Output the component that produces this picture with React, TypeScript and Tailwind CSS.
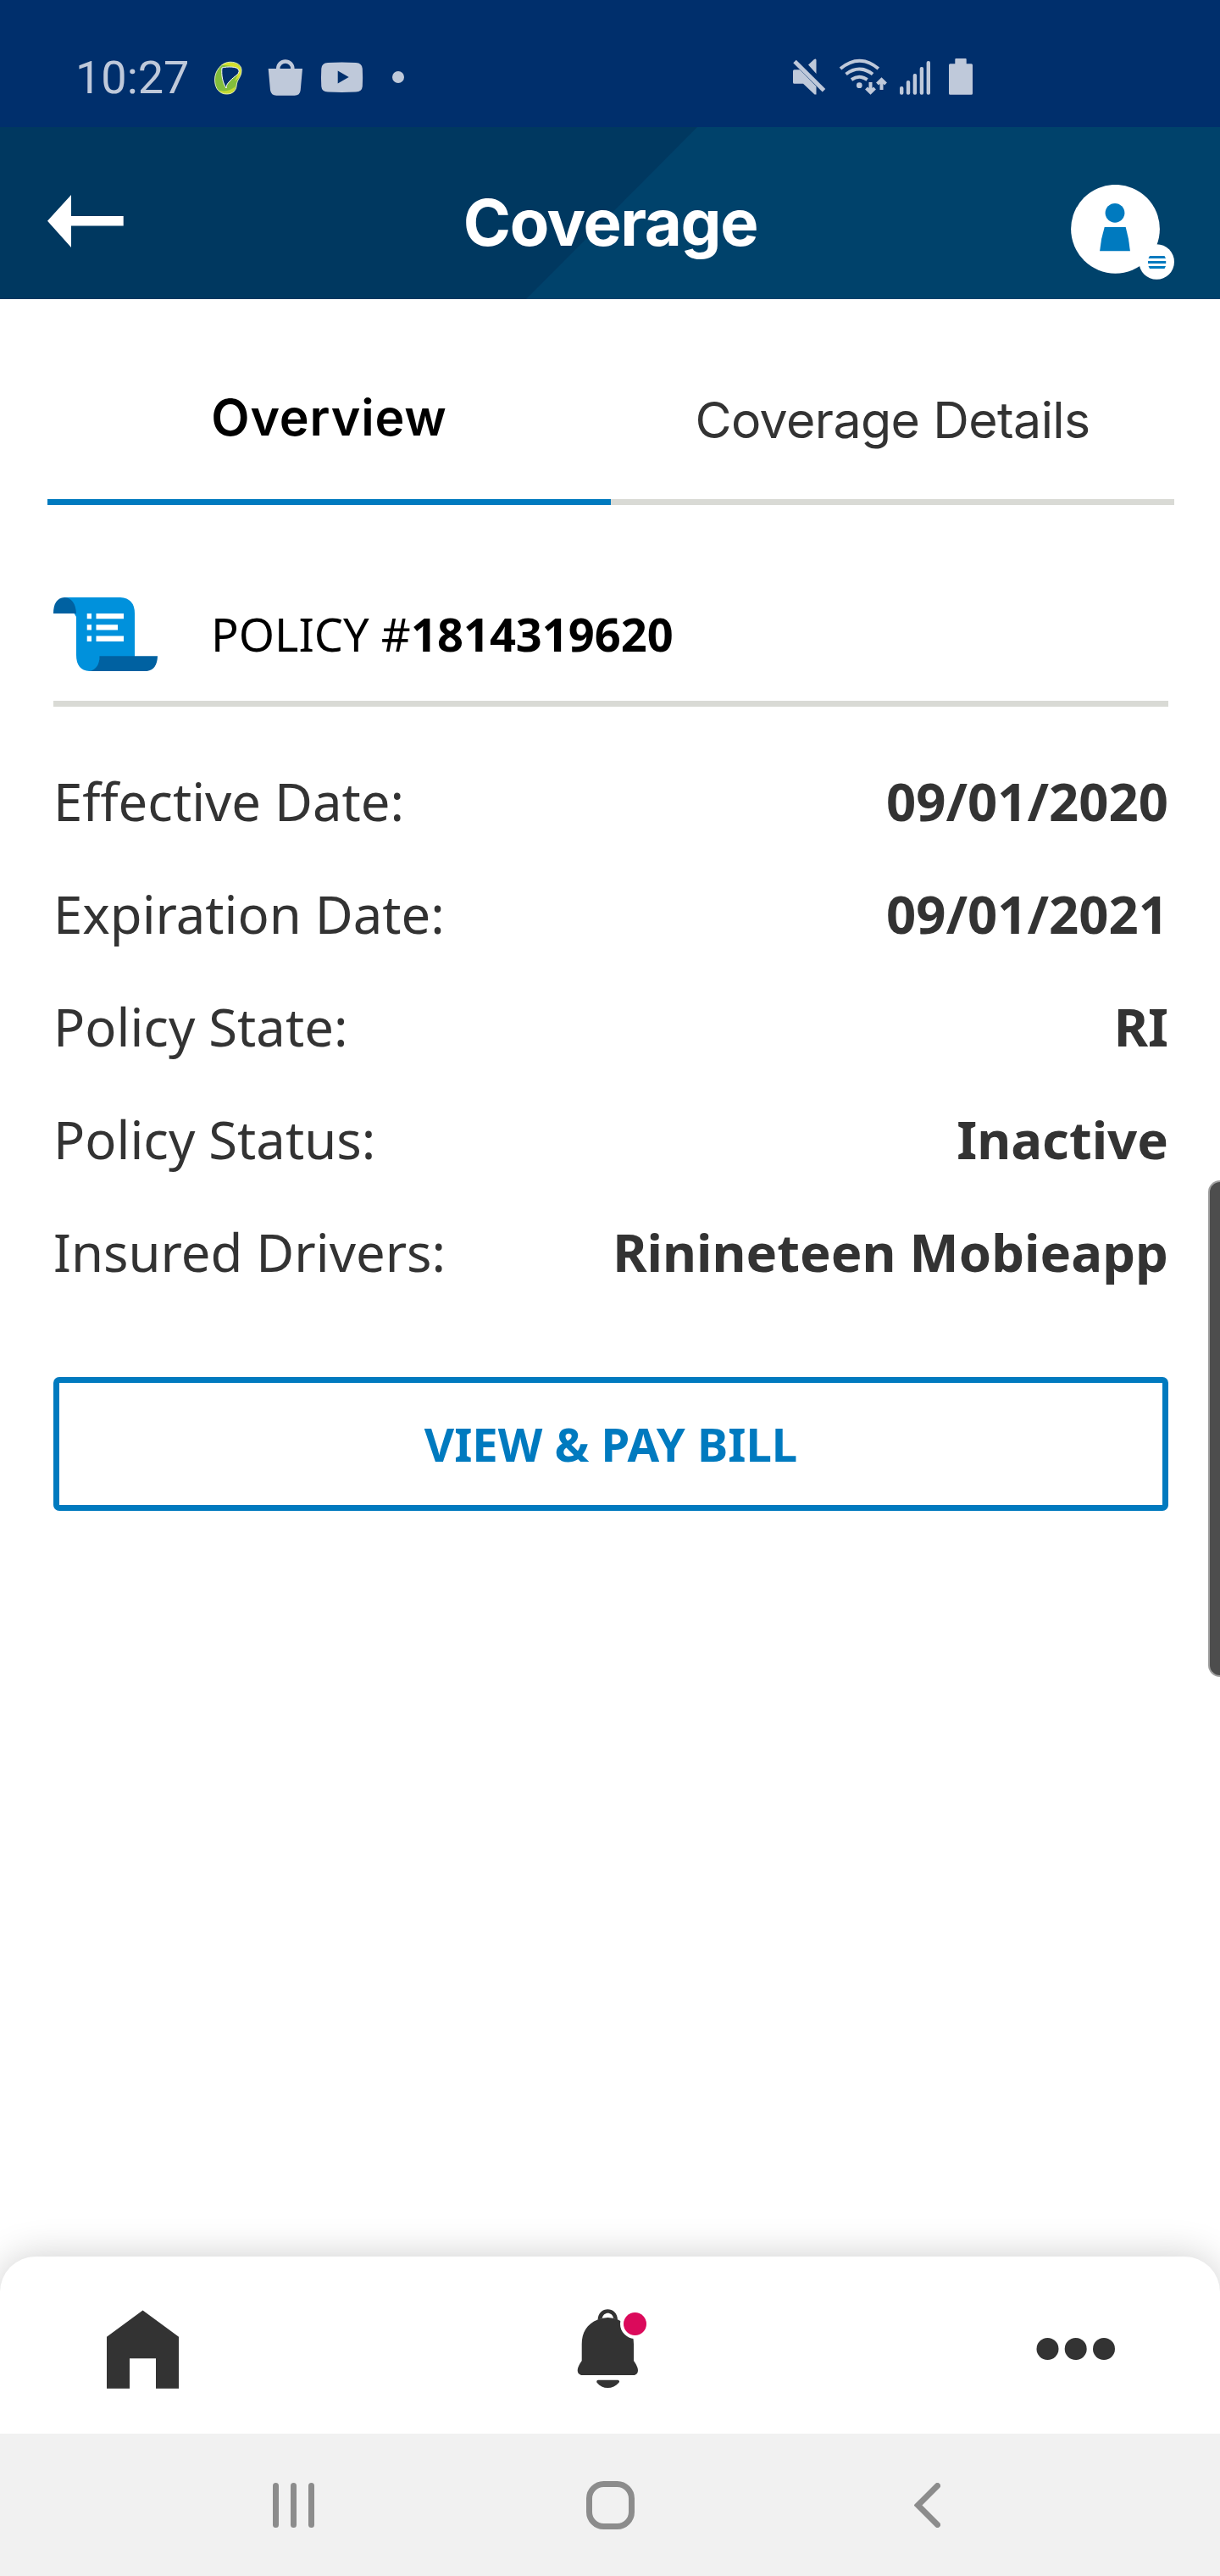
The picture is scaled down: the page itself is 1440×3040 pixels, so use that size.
const rows: [string, string][] = [
  ["Effective Date:", "09/01/2020"],
  ["Expiration Date:", "09/01/2021"],
  ["Policy State:", "RI"],
  ["Policy Status:", "Inactive"],
  ["Insured Drivers:", "Rinineteen Mobieapp"],
];

function StatusBar() {
  return (
    <div className="flex h-[150px] shrink-0 items-center bg-[#002f6c] pt-8 pl-[89px] text-[#bfc9da]">
      <span className="w-[164px] pt-0.5 font-['Roboto'] text-[54px] leading-[62px] whitespace-nowrap">10:27</span>
      <svg className="h-[50px] w-[230px] shrink-0" viewBox="253 66 230 50" fill="currentColor">
        <path
          d="M272 73.200C262 73 253.500 83 253.500 94c0 11 6 17 14 17 8 0 11-5 11.500-9 .500-9 6-10 6-19 0-6-5-9.600-13-9.800Z"
          fill="#82bd3c"
        />
        <path d="M261 77c7-6 23-4 24 6 0 6-4 10-8 13 2-5 5-9 4-13-3-5-12-6-20-6Z" fill="#d5e02e" />
        <path d="M262 80c6-1.500 19-2 20 3 1 5-6 7-10 12-3 3-5 5-5 9-4-6-6-15-5-24Z" fill="#002f6c" stroke="#fff" strokeWidth="1" />
        <path d="M258 106c6 3 14 1 20-4-1 6-4 9-10 9-4 0-8-2-10-5Z" fill="#c5da34" />
        <path
          d="M272 73.200C262 73 253.500 83 253.500 94c0 11 6 17 14 17 8 0 11-5 11.500-9 .500-9 6-10 6-19 0-6-5-9.600-13-9.800Z"
          fill="none"
          stroke="#eef5c8"
          strokeWidth=".9"
        />
        <path d="M316.700 81h9.300a10.800 10.800 0 0 1 21.600 0h9.400l-2.300 25.500q-.700 6.200-7 6.200h-21.500q-6 0-7.200-6.200ZM330.500 81h12.600a6.300 6.300 0 0 0-12.600 0Z" fillRule="evenodd" />
        <path d="M387 74q16.500-.8 33 0 7.300.4 7.800 7 .6 10.500 0 21-.5 6-7.800 6.500-16.500.8-33 0-7.300-.5-7.700-6.500-.6-10.500 0-21 .4-6.600 7.700-7Zm11.700 9.500v15l13-7.500Z" fillRule="evenodd" />
        <circle cx="470" cy="91" r="7" />
      </svg>
      <svg className="ml-[452px] h-[50px] w-[216px] shrink-0" viewBox="935 66 216 50" fill="currentColor">
        <path d="M937.500 82.300H944l19.500 19.700v9.500h-2L948 98.700h-10.500q-1.500 0-1.500-1.500V83.800q0-1.500 1.500-1.500ZM954 76.500l7-6.500q2.500-1.500 2.500 1v16Z" />
        <path d="m938 72.500 34.500 34.300" stroke="currentColor" strokeWidth="5" />
        <g fill="none" stroke="currentColor" strokeWidth="4">
          <path d="M992 81q22.400-18.500 44.800 0" />
          <path d="M998.500 87.500q15.800-12 31.600 0" />
          <path d="M1005 94q9.300-6.500 18.600 0" />
          <path d="M1027.500 97v11M1022.500 104l5 5 5-5M1040.500 106V95M1035.500 99l5-5 5 5" />
        </g>
        <circle cx="1014.300" cy="100.700" r="3.400" />
        <rect x="1062" y="102" width="4.400" height="9.700" rx="2" />
        <rect x="1069.800" y="95" width="4.400" height="16.700" rx="2" />
        <rect x="1077.700" y="87" width="4.400" height="24.700" rx="2" />
        <rect x="1085.700" y="79" width="4.400" height="32.700" rx="2" />
        <rect x="1093.600" y="72" width="4.400" height="39.700" rx="2" />
        <path d="M1128.300 69h11.400q1 0 1 1v5.300h5.800q1.500 0 1.500 1.500v33.400q0 1.500-1.500 1.500h-25q-1.500 0-1.500-1.500V76.800q0-1.500 1.500-1.500h5.800V70q0-1 1-1Z" />
      </svg>
    </div>
  );
}

function Header() {
  return (
    <header className="relative flex h-[203px] shrink-0 items-center justify-between bg-[#00426b] pr-[53px] pl-14">
      <svg className="absolute inset-0 h-full w-full" viewBox="0 0 1440 203">
        <path d="M0 0h823L621 203H0Z" fill="#003860" />
      </svg>
      <svg className="relative mt-[18px] h-[62px] w-[90px]" viewBox="56 230 90 62" fill="#fff">
        <path d="M84 230v25h61.700v11.500H84V292l-28-31.300Z" />
      </svg>
      <h1 className="relative mb-[-20px] ml-[31px] font-['Inter'] text-[76px] leading-[90px] font-bold tracking-[-0.018em] whitespace-nowrap text-white">
        Coverage
      </h1>
      <svg className="relative mt-[45px] h-[112px] w-[123px]" viewBox="1264 218 123 112">
        <circle cx="1316.500" cy="270.300" r="52.400" fill="#fff" />
        <circle cx="1316" cy="251.300" r="11.400" fill="#007abf" />
        <path d="M1303.700 268h25q3.800 13 5.200 28.200h-35.800q1.400-15 5.600-28.200Z" fill="#007abf" />
        <circle cx="1365.200" cy="309" r="20.800" fill="#fff" />
        <path d="M1357 302h17.500l1.500 3h-20.500ZM1355 308h21.200v3H1355ZM1355.500 314H1376l-1.500 3H1357Z" fill="#007abf" />
      </svg>
    </header>
  );
}

function PolicyIcon() {
  return (
    <svg className="h-[87px] w-[123px] shrink-0" viewBox="63 705 123 87">
      <path d="M76 705h66q17 1 17 19v51l-41 1q0 16-12.500 16-15.500-1-15.500-19v-45Z" fill="#0091dc" />
      <path d="M63 724q0-18 13-19 13 1 14 19ZM117.500 774.300H186q-.500 16-12.500 17.700h-68q12-2.500 12-17.700Z" fill="#0061a1" />
      <path d="M102.700 724h5.300v6.300h-5.300ZM113.500 724H146v6.300h-32.500ZM102.700 737.200h5.300v6.300h-5.300ZM113.500 737.200H139v6.300h-25.500ZM102.700 750.600h5.300v6.300h-5.300ZM113.500 750.600H146v6.300h-32.500Z" fill="#fff" />
    </svg>
  );
}

function BottomNav() {
  return (
    <nav className="flex h-[209px] shrink-0 items-center justify-between rounded-t-[42px] bg-white pr-[123px] pl-[126px] shadow-[0_0_46px_rgba(0,0,0,0.2)]">
      <svg className="mt-[9px] h-[93px] w-[85px]" viewBox="126 2725 85 93" fill="#333">
        <path d="m168.500 2725.500 42.500 31.300v61h-27v-35.500h-31v35.500h-27v-61Z" />
      </svg>
      <svg className="mt-[9px] ml-[10px] h-[94px] w-[82px]" viewBox="681 2725 82 94" fill="#333">
        <path d="M705.600 2738c0-17 23.400-17 23.400 0l-4.800-2c-1.500-8.500-12-8.500-13.500 0Z" />
        <path d="M705.500 2737.500q12-5 24 0c13 6 18.500 15 18.500 29v19.500q5 7 5 11.500 0 4-4 5.500h-63q-4.300-1.500-4.300-5.500 0-4.500 5-11.500v-19.500c0-14 6-24 18.800-29ZM706 2808.700h23.500q2.500 1 1 3c-7 8.500-19.500 8.500-26 0q-1-2.500 1.500-3Z" />
        <circle cx="749.500" cy="2742.500" r="17.500" fill="#fff" />
        <circle cx="749.500" cy="2742.500" r="13.500" fill="#db0a5b" />
      </svg>
      <svg className="mt-2 h-[26px] w-[94px]" viewBox="1223 2759 94 26" fill="#333">
        <circle cx="1236.500" cy="2772" r="13" />
        <circle cx="1269.700" cy="2772" r="13" />
        <circle cx="1303" cy="2772" r="13" />
      </svg>
    </nav>
  );
}

function SystemNav() {
  return (
    <div className="flex h-[168px] shrink-0 items-center justify-between bg-[#f1f1f1] px-[322px]">
      <svg className="h-[53px] w-[49px]" viewBox="0 0 49 53" fill="#8c8c8c">
        <rect x="0" width="7" height="53" rx="3.500" />
        <rect x="21" width="7" height="53" rx="3.500" />
        <rect x="42" width="7" height="53" rx="3.500" />
      </svg>
      <svg className="mr-[9px] h-[57px] w-[57px]" viewBox="0 0 57 57" fill="none">
        <rect x="3.500" y="3.500" width="50" height="50" rx="17" stroke="#8c8c8c" strokeWidth="7" />
      </svg>
      <svg className="mr-[8px] h-[53px] w-[31px]" viewBox="0 0 31 53" fill="none">
        <path d="M27.500 3.500 4.500 26.500l23 23" stroke="#8c8c8c" strokeWidth="7" strokeLinecap="round" />
      </svg>
    </div>
  );
}

export default function App() {
  return (
    <div className="relative flex h-[3040px] w-[1440px] flex-col overflow-hidden bg-white font-['Noto_Sans',sans-serif] text-[#333]">
      <StatusBar />
      <Header />
      <div className="mr-[54px] ml-14 flex h-[243px] shrink-0 font-['Inter'] text-[59px] leading-[72px] whitespace-nowrap">
        <div className="flex flex-1 justify-center border-b-[7px] border-[#007abf] pt-[104px] font-semibold tracking-[0.014em] text-black">
          Overview
        </div>
        <div className="flex flex-1 justify-center border-b-[7px] border-[#d9dad5] pt-[107px] tracking-[-0.01em]">
          Coverage Details
        </div>
      </div>
      <main className="flex flex-1 flex-col pt-[109px] pr-[61px] pl-[63px]">
        <div className="flex h-[129px] shrink-0 items-start border-b-[7px] border-[#d9dad5] text-black">
          <PolicyIcon />
          <p className="mt-px ml-[63px] text-[54.2px] leading-[85px] whitespace-nowrap">
            POLICY #<b>1814319620</b>
          </p>
        </div>
        <dl className="mt-[45px] text-[61.6px] leading-[133px] whitespace-nowrap">
          {rows.map(([label, value]) => (
            <div key={label} className="flex justify-between">
              <dt>{label}</dt>
              <dd className="font-bold">{value}</dd>
            </div>
          ))}
        </dl>
        <button className="mt-[81px] flex h-[158px] shrink-0 items-center justify-center rounded-[7px] border-[7px] border-[#007abf] pt-0.5 text-[54.4px] font-bold text-[#007abf]">
          VIEW &amp; PAY BILL
        </button>
      </main>
      <BottomNav />
      <SystemNav />
      <div className="absolute top-[1393px] right-0 h-[586px] w-[14px] rounded-l-[14px] border-y-2 border-l-2 border-[#a0a0a0] bg-[#4d4d4d]" />
    </div>
  );
}
